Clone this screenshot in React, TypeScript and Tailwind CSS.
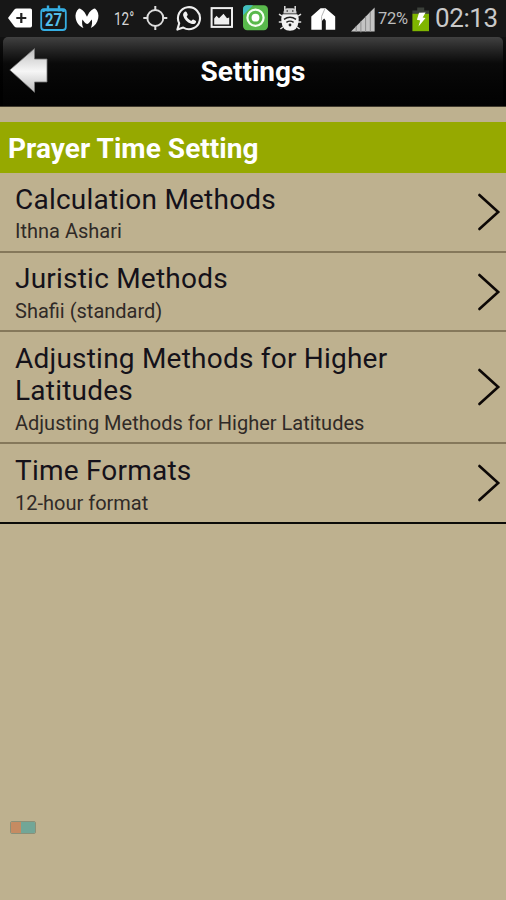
import { ReactNode } from "react";
import { clsx } from "clsx";

interface GlyphProps {
    width: number;
    className?: string;
    children: ReactNode;
}

const Glyph = ({ width, className, children }: GlyphProps) => (
    <svg
        width={width}
        height={37}
        viewBox={`0 0 ${width} 37`}
        fill="none"
        className={clsx("shrink-0", className)}
        aria-hidden="true"
    >
        {children}
    </svg>
);

const StatusBar = () => (
    <div className="flex h-[37px] shrink-0 items-center bg-[#171717] pl-2 text-[#d6d6d6]">
        <Glyph width={25}>
            <path d="M0 18 6.2 9.8Q7.2 8.6 8.8 8.6H22.4Q24 8.6 24 10.2V25.8Q24 27.4 22.4 27.4H8.8Q7.2 27.4 6.2 26.2Z" fill="#fff" />
            <path d="M13.3 13v10M8.3 18h10" stroke="#222" strokeWidth="2.2" />
        </Glyph>
        <Glyph width={28} className="ml-[7px]">
            <rect x="1.2" y="9.2" width="24.6" height="20.8" rx="3" stroke="#36aee2" strokeWidth="1.8" />
            <path d="M8 5.5v6M19 5.5v6M3.5 12V10h20v2" stroke="#36aee2" strokeWidth="2.4" />
            <text
                x="5"
                y="26.2"
                textLength="17"
                lengthAdjust="spacingAndGlyphs"
                fill="#54bde9"
                fontFamily="Roboto, sans-serif"
                fontWeight="700"
                fontSize="18"
            >
                27
            </text>
        </Glyph>
        <Glyph width={24} className="ml-[7px]">
            <path
                d="M4 8.4C7.6 9 10 12 12 16.8 14 12 16.4 9 20 8.4 23 11 24 14.6 23.2 18.3 22.5 22.5 20 26 15.8 28 17 25.6 17.4 22 16.8 19.6 15.4 21 13.8 24 12.2 24 10.4 24 9 21 7.4 19.4 6.8 22 7 25.6 8.4 28 4 26.4 1.4 22.6.7 18.3 0 14.6 1 11 4 8.4Z"
                fill="#fff"
            />
        </Glyph>
        <span className="ml-[15px] w-[22px] origin-left scale-x-[0.75] whitespace-nowrap text-[18px] leading-none">12°</span>
        <Glyph width={25} className="ml-[7px]">
            <circle cx="12.3" cy="18" r="8" stroke="#ddd" strokeWidth="1.9" />
            <path d="M12.3 6v5M12.3 25v5M.3 18h5M19.3 18h5" stroke="#ddd" strokeWidth="2" />
        </Glyph>
        <Glyph width={26} className="ml-[8px]">
            <path d="M1.4 29.6 3.2 23.2A11 11 0 1 1 7.3 27.6Z" fill="#171717" stroke="#eee" strokeWidth="2.1" strokeLinejoin="round" />
            <path
                d="M8.8 11.8c.7-.5 1.5-.4 1.9.4l1 2.4c.3.7-.7 1.6-1 2 1 2 2.4 3.4 4.6 4.4.5-.4 1.3-1.7 2-1.4l2.3 1.2c.8.4.5 1.5 0 2.1-1.1 1.2-2.8 1.4-4.4.9-4.3-1.4-7-4.3-8-8-.4-1.6.3-3.1 1.6-4Z"
                fill="#f2f2f2"
            />
        </Glyph>
        <Glyph width={24} className="ml-[8px]">
            <rect x="1.6" y="8.1" width="20.4" height="18.8" stroke="#eee" strokeWidth="2" />
            <path d="M4.2 24.4V18.4L6.5 15.8 9 18.2 13.5 13.8 17 18.2 19.2 17.4V24.4Z" fill="#eee" />
        </Glyph>
        <Glyph width={25} className="ml-[9px]">
            <rect y="5.2" width="25" height="25" rx="4.2" fill="#59b94c" />
            <path d="M0 15.2V9.4Q0 5.2 4.2 5.2H10Z" fill="#42bdc1" />
            <circle cx="12.5" cy="17.7" r="8.1" stroke="#f5fff2" strokeWidth="2.2" />
            <circle cx="12.5" cy="17.7" r="3.9" fill="#fff" />
        </Glyph>
        <Glyph width={25} className="ml-[10px]">
            <path d="M6.8 6v5M17.2 6v5M4 16.2 1 14.2M20 16.2l3-2M4 22H.8M20 22h3.2M5 27l-2.6 2M19 27l2.6 2" stroke="#ddd" strokeWidth="1.5" />
            <path d="M5.4 13.4Q5.4 8.4 9 8.2H15Q18.6 8.4 18.6 13.4Z" fill="#d0d0d0" />
            <path d="M4.6 14.2h14.8Q21.2 17.4 20.6 21.4 19.6 30.8 12 30.8T3.4 21.4Q2.8 17.4 4.6 14.2Z" fill="#f2f2f2" />
            <path d="M9.2 10.2v1.6M14.8 10.2v1.6" stroke="#222" strokeWidth="1.2" />
            <path d="M6 19.4q6-4.4 12 0M8.4 22.4q3.6-2.6 7.2 0" stroke="#222" strokeWidth="1.4" />
            <circle cx="12" cy="25" r="1.4" fill="#222" />
        </Glyph>
        <Glyph width={25} className="ml-[8px]">
            <path d="M.3 29.8V16.6L9.6 8.2H14.6L24.2 16.6V29.8H14.8V20.8L13.2 18.4 10.8 21V29.8Z" fill="#fff" />
            <path d="M13.8 9 10.6 16.4V20.6" stroke="#b5b5b5" strokeWidth="1" />
        </Glyph>
        <Glyph width={24} className="ml-[15px]">
            <path d="M0 31.5 23.6 7.5V31.5Z" fill="#c4c4c4" />
            <path d="M5.2 26v6M9.9 21.4v11M14.6 16.6v15.4M19.3 11.8v20" stroke="#8c8c8c" strokeWidth="1" />
        </Glyph>
        <span className="ml-[3px] w-[31px] origin-left scale-x-[0.97] whitespace-nowrap text-[17px] leading-none tracking-[-0.3px] text-[#bdbdbd]">72%</span>
        <Glyph width={18} className="ml-[3px]">
            <path d="M5.2 7.5h7v3H17v3.4H.4v-3.4h4.8Z" fill="#3b403a" />
            <path d="M.4 13.8H17v17.4H.4Z" fill="#7fb500" />
            <path d="M7 12.8 13.6 12.4 10.7 17.4 13.5 18 6.5 26.6 8.2 20.4 4.9 19.7Z" fill="#fff" />
        </Glyph>
        <span className="ml-[5px] -mt-[2px] whitespace-nowrap text-[26px] leading-none tracking-[-0.4px] text-[#c9c9c9]">02:13</span>
    </div>
);

const Header = () => (
    <header className="h-[70px] shrink-0 border-b border-[#403a2d] bg-linear-to-b from-[#111] to-black px-[3px]">
        <div className="grid h-[69px] grid-cols-[50px_1fr_50px] items-center rounded-t-[5px] bg-linear-to-b from-[#414141] via-[#0a0a0a] via-38% to-[#020202]">
            <svg width="40" height="46" viewBox="0 0 40 46" className="ml-[6px] mt-[-1px]" aria-label="Back">
                <defs>
                    <linearGradient id="arrow" x1="0" y1="0" x2="0" y2="1">
                        <stop offset="0" stopColor="#bbb" />
                        <stop offset=".28" stopColor="#ddd" />
                        <stop offset=".52" stopColor="#f6f6f6" />
                        <stop offset="1" stopColor="#bcbcbc" />
                    </linearGradient>
                </defs>
                <path d="M.8 22 25.5.6V11H38V34H25.5V44.3Z" fill="url(#arrow)" stroke="#777" strokeWidth=".8" />
            </svg>
            <h1 className="text-center text-[28px] font-bold text-white">Settings</h1>
        </div>
    </header>
);

interface SettingRowProps {
    title: string;
    value: string;
    last?: boolean;
}

const SettingRow = ({ title, value, last }: SettingRowProps) => (
    <button
        className={clsx(
            "flex w-full items-center justify-between border-b-2 pt-[10.8px] pb-[6.3px] pl-[15px] pr-[5px] text-left text-[#15121a]",
            last ? "border-[#0b0b08]" : "border-[#85785b]"
        )}
    >
        <span className="w-[400px]">
            <span className="block text-[28px] leading-[32.5px] tracking-[0.22px]">{title}</span>
            <span className="mt-[2px] block text-[20px] leading-[26px] text-[#302a27]">{value}</span>
        </span>
        <svg width="24" height="38" viewBox="0 0 24 38" fill="none" className="mb-1 shrink-0" aria-hidden="true">
            <path d="M2.4 2 21.2 19 2.4 36" stroke="#0d0806" strokeWidth="2.6" strokeLinecap="round" />
        </svg>
    </button>
);

const settings = [
    { title: "Calculation Methods", value: "Ithna Ashari" },
    { title: "Juristic Methods", value: "Shafii (standard)" },
    { title: "Adjusting Methods for Higher Latitudes", value: "Adjusting Methods for Higher Latitudes" },
    { title: "Time Formats", value: "12-hour format" },
];

export default function App() {
    return (
        <div className="flex h-[900px] w-[506px] flex-col overflow-hidden bg-[#beb18f] font-[Roboto,sans-serif]">
            <StatusBar />
            <Header />
            <main className="flex flex-1 flex-col pt-[15px]">
                <h2 className="flex h-[51px] items-center bg-[#96a900] pl-2 pt-[2px] text-[28px] font-bold tracking-[0.05px] text-white">
                    Prayer Time Setting
                </h2>
                {settings.map((item, index) => (
                    <SettingRow key={item.title} {...item} last={index === settings.length - 1} />
                ))}
                <div className="mt-auto mb-[66px] ml-[10px] flex h-[13px] w-[26px] overflow-hidden rounded-[2px] border border-[#8b9078]">
                    <div className="w-[10px] bg-[#c58b62]" />
                    <div className="flex-1 bg-[#72a697]" />
                </div>
            </main>
        </div>
    );
}
